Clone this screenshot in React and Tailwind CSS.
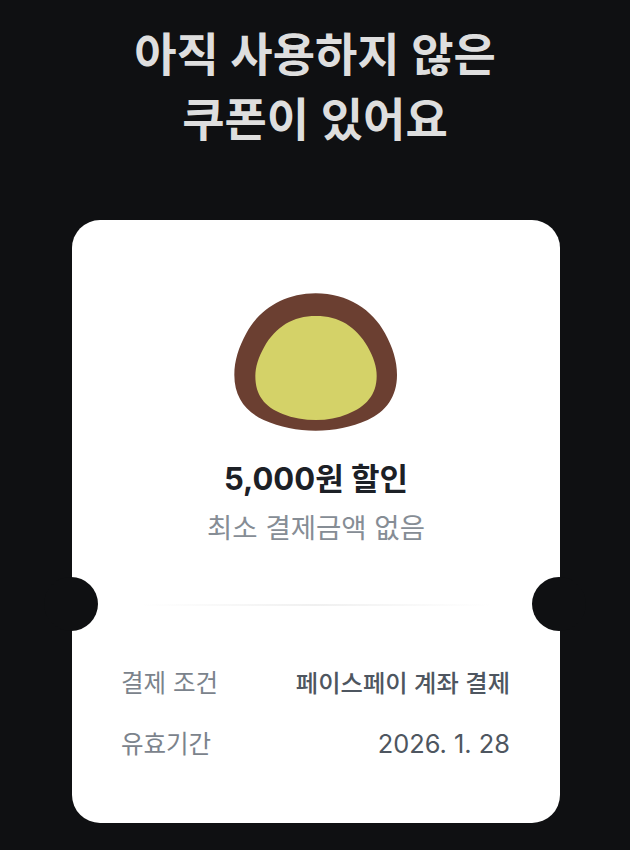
import React from 'react';

const font = { fontFamily: 'Inter, "Noto Sans CJK KR", sans-serif' };

const Mochi = () => (
  <svg width="230" height="180" viewBox="0 0 690 540" className="block">
    <path
      d="M344 70 C440 70 515 120 552 190 C575 232 588 272 588 315 C588 380 555 425 500 450 C450 472 400 482 344 482 C288 482 238 472 188 450 C133 425 100 380 100 315 C100 272 113 232 136 190 C173 120 248 70 344 70 Z"
      fill="#6b3f31"
    />
    <path
      d="M345 138 C415 138 465 170 500 230 C518 262 527 290 527 318 C527 375 495 410 440 432 C410 444 380 450 345 450 C310 450 275 444 245 432 C190 410 163 375 163 318 C163 290 172 262 190 230 C225 170 275 138 345 138 Z"
      fill="#d4d268"
    />
  </svg>
);

const Row = ({ label, value, medium }) => (
  <div className="flex items-center justify-between h-[61px]">
    <span className="text-[24.5px] text-[#7b838c]">{label}</span>
    <span className={`${medium ? 'text-[24.3px] font-medium' : 'text-[25.4px]'} text-[#4e5660]`}>{value}</span>
  </div>
);

export default function App() {
  return (
    <div className="w-[630px] h-[850px] bg-[#0f1012] overflow-hidden flex flex-col items-center" style={font}>
      <h1 className="pt-[22px] text-[46px] leading-[65px] font-semibold text-center text-[#dedede]">
        아직 사용하지 않은
        <br />
        쿠폰이 있어요
      </h1>
      <div className="relative mt-[68px] ml-[2px] w-[488px] h-[603px] bg-white rounded-[28px] flex flex-col items-center">
        <div className="absolute left-[-28px] top-[357px] w-[54px] h-[54px] rounded-full bg-[#0f1012]" />
        <div className="absolute right-[-26px] top-[357px] w-[54px] h-[54px] rounded-full bg-[#0f1012]" />
        <div className="mt-[50px]">
          <Mochi />
        </div>
        <p className="mt-[7px] text-[31px] leading-[44px] font-bold text-[#1c2026]">5,000원 할인</p>
        <p className="mt-[7px] text-[27.5px] leading-[40px] text-[#868d95]">최소 결제금액 없음</p>
        <div className="mt-[56px] w-[350px] h-[2px] bg-gradient-to-r from-transparent via-[#f0f0f0] to-transparent" />
        <div className="w-full pl-[49px] pr-[50px] mt-[47px]">
          <Row label="결제 조건" value="페이스페이 계좌 결제" medium />
          <Row label="유효기간" value="2026. 1. 28" />
        </div>
      </div>
    </div>
  );
}
